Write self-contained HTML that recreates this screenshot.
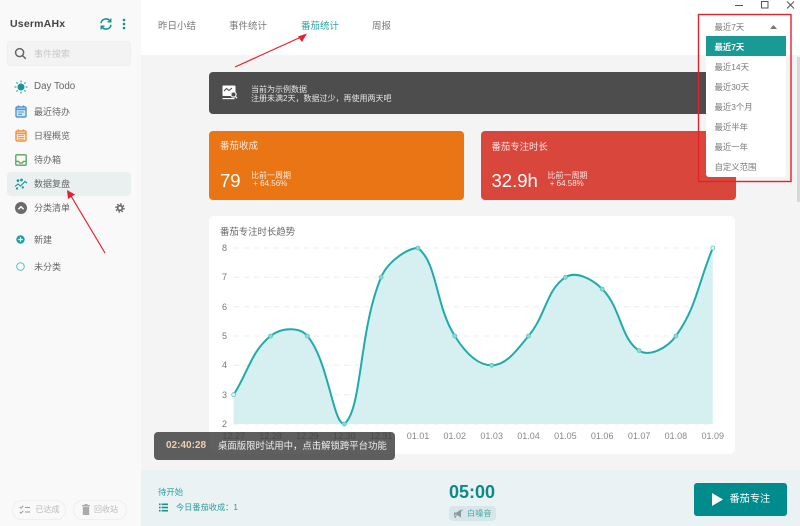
<!DOCTYPE html>
<html lang="zh">
<head>
<meta charset="utf-8">
<title>UsermAHx</title>
<style>
html,body{margin:0;padding:0}
body{width:800px;height:526px;overflow:hidden;position:relative;background:#f4f4f4;font-family:"Liberation Sans","Noto Sans CJK SC",sans-serif;color:#555}
.a{position:absolute;white-space:nowrap}
svg{display:block}
#side{left:0;top:0;width:141px;height:526px;background:#f9f9f9}
#top{left:141px;top:0;width:659px;height:55px;background:#fff}
.nav{top:20px;font-size:9.5px;line-height:14px;color:#777}
.si{left:34px;font-size:9px;line-height:14px;color:#666}
.dd{left:714.5px;font-size:8.4px;line-height:14px;color:#777}
.yl{left:222px;font-size:9px;line-height:10px;color:#777}
.xl{top:431px;font-size:9px;line-height:10px;color:#888;width:40px;text-align:center;margin-left:-20px}
.btn{top:500px;height:18px;width:52px;border:1px solid #efefef;border-radius:10px;font-size:8px;line-height:18px;color:#bbb;box-sizing:content-box}
</style>
</head>
<body>
<div class="a" id="side"></div>
<div class="a" id="top"></div>

<!-- sidebar header -->
<div class="a" style="left:10px;top:16px;font-size:10.5px;font-weight:bold;line-height:17px;color:#444;letter-spacing:.2px">UsermAHx</div>
<svg class="a" style="left:99px;top:17px" width="14" height="14" viewBox="0 0 14 14" fill="none" stroke="#0f8f8c" stroke-width="1.5"><path d="M2 6.2A5 5 0 0 1 11 4M12 7.8A5 5 0 0 1 3 10"/><path d="M11.8 1.5V4.8H8.6M2.2 12.5V9.2H5.4" stroke-width="1.3"/></svg>
<svg class="a" style="left:121px;top:18px" width="6" height="12" viewBox="0 0 6 12" fill="#0f8f8c"><circle cx="3" cy="2" r="1.3"/><circle cx="3" cy="6" r="1.3"/><circle cx="3" cy="10" r="1.3"/></svg>

<!-- search -->
<div class="a" style="left:7px;top:41px;width:124px;height:25px;background:#f3f3f3;border:1px solid #efefef;border-radius:4px;box-sizing:border-box"></div>
<svg class="a" style="left:14px;top:47px" width="13" height="13" viewBox="0 0 13 13" fill="none" stroke="#666" stroke-width="1.5"><circle cx="5.6" cy="5.6" r="4"/><path d="M8.6 8.6L11.8 11.8"/></svg>
<div class="a" style="left:34px;top:47px;font-size:9px;line-height:14px;color:#c8c8c8">事件搜索</div>

<!-- sidebar items -->
<svg class="a" style="left:14px;top:80px" width="14" height="14" viewBox="0 0 14 14" fill="none" stroke="#14979a" stroke-width="1"><circle cx="7" cy="7" r="3" fill="#14979a"/><path d="M7 .5V2.4M7 11.6V13.5M.5 7H2.4M11.6 7H13.5M2.4 2.4L3.7 3.7M10.3 10.3L11.6 11.6M2.4 11.6L3.7 10.3M10.3 3.7L11.6 2.4"/></svg>
<div class="a si" style="top:80px;font-size:9.8px">Day Todo</div>

<svg class="a" style="left:15px;top:105px" width="12" height="13" viewBox="0 0 12 13" fill="none" stroke="#4f97cf" stroke-width="1.4"><rect x="1" y="2" width="10" height="10" rx="1.2" fill="#d6e8f5"/><path d="M1 4.4H11" stroke-width="1.6"/><path d="M3.5 .4V2.5M8.5 .4V2.5"/><path d="M3.2 7H8.8M3.2 9.3H7" stroke-width="1.1"/></svg>
<div class="a si" style="top:105px">最近待办</div>

<svg class="a" style="left:15px;top:129px" width="12" height="13" viewBox="0 0 12 13" fill="none" stroke="#ee9447" stroke-width="1.4"><rect x="1" y="2" width="10" height="10" rx="1.2" fill="#fbe6d2"/><path d="M1 4.4H11" stroke-width="1.6"/><path d="M3.5 .4V2.5M8.5 .4V2.5"/><path d="M3 6.6H9M3 8.4H9M3 10.2H9" stroke-width=".9"/></svg>
<div class="a si" style="top:129px">日程概览</div>

<svg class="a" style="left:15px;top:154px" width="12" height="12" viewBox="0 0 12 12" fill="none" stroke="#58a45c" stroke-width="1.3"><rect x=".8" y=".8" width="10.4" height="10.4" rx="1"/><path d="M.8 7.4H3.6L4.6 9H7.4L8.4 7.4H11.2"/></svg>
<div class="a si" style="top:153px">待办箱</div>

<div class="a" style="left:7px;top:172px;width:124px;height:24px;background:#eaeff0;border-radius:4px"></div>
<svg class="a" style="left:14px;top:178px" width="14" height="12" viewBox="0 0 14 12" fill="none" stroke="#14979a" stroke-width="1.1"><path d="M1 8.5L4 6L6.5 8L11 3.5L13 5"/><circle cx="4" cy="2.6" r=".8" fill="#14979a"/><circle cx="7.5" cy="2" r=".8" fill="#14979a"/><circle cx="3" cy="10.5" r=".6" fill="#14979a"/><circle cx="8.8" cy="9.4" r=".6" fill="#14979a"/></svg>
<div class="a si" style="top:177px">数据复盘</div>

<svg class="a" style="left:15px;top:202px" width="12" height="12" viewBox="0 0 12 12"><circle cx="6" cy="6" r="6" fill="#6b6b6b"/><path d="M3.4 7.2L6 4.7L8.6 7.2" fill="none" stroke="#fff" stroke-width="1.4"/></svg>
<div class="a si" style="top:201px">分类清单</div>
<svg class="a" style="left:115px;top:203px" width="10" height="10" viewBox="0 0 10 10" fill="none" stroke="#666"><circle cx="5" cy="5" r="2.4" stroke-width="1.7"/><circle cx="5" cy="5" r="4" stroke-width="1.4" stroke-dasharray="1.6 1.54"/></svg>

<svg class="a" style="left:16px;top:235px" width="9" height="9" viewBox="0 0 9 9"><circle cx="4.5" cy="4.5" r="4.2" fill="#17a3a5"/><path d="M2.3 4.5H6.7M4.5 2.3V6.7" stroke="#fff" stroke-width="1.2"/></svg>
<div class="a si" style="top:233px">新建</div>

<svg class="a" style="left:16px;top:262px" width="9" height="9" viewBox="0 0 9 9"><circle cx="4.5" cy="4.5" r="3.8" fill="none" stroke="#55c3c7" stroke-width="1"/></svg>
<div class="a si" style="top:260px">未分类</div>

<!-- bottom side buttons -->
<div class="a btn" style="left:11.5px"><span style="position:absolute;left:23px">已达成</span></div>
<svg class="a" style="left:19px;top:505px" width="12" height="10" viewBox="0 0 12 10" fill="none" stroke="#999" stroke-width="1"><path d="M.8 2L2 3.2L4.2 .8M.8 7L2 8.2L4.2 5.8M6 2.5H11M6 7H11"/></svg>
<div class="a btn" style="left:73px"><span style="position:absolute;left:20px">回收站</span></div>
<svg class="a" style="left:82px;top:504px" width="8" height="11" viewBox="0 0 8 11" fill="#aaa"><rect x="0" y="1" width="8" height="1.3"/><rect x="2.5" y="0" width="3" height="1.3"/><path d="M.8 2.8H7.2V11H.8Z"/></svg>

<!-- top nav -->
<div class="a nav" style="left:158px">昨日小结</div>
<div class="a nav" style="left:229px">事件统计</div>
<div class="a nav" style="left:301px;color:#2aa3a3">番茄统计</div>
<div class="a nav" style="left:372px">周报</div>

<!-- scrollbar -->
<div class="a" style="left:797px;top:57px;width:3px;height:145px;background:#d8d8d8"></div>

<!-- notice -->
<div class="a" style="left:209px;top:72px;width:526px;height:42px;background:#4d4d4d;border-radius:4px"></div>
<svg class="a" style="left:222px;top:85px" width="16" height="16" viewBox="0 0 16 16" fill="none"><rect x=".5" y=".5" width="13" height="10.5" rx="1" fill="#fff"/><path d="M2 6L4.5 3.5L7 5.5L10 3" stroke="#4d4d4d" stroke-width="1.1"/><rect x=".5" y="13" width="12" height="1.2" fill="#fff"/><circle cx="11.5" cy="9.5" r="2.6" fill="#4d4d4d" stroke="#fff" stroke-width="1.1"/><path d="M13.3 11.4L15 13.2" stroke="#fff" stroke-width="1.2"/></svg>
<div class="a" style="left:251px;top:85px;font-size:8px;line-height:9px;color:#e6e6e6">当前为示例数据<br>注册未满2天，数据过少，再使用两天吧</div>

<!-- cards -->
<div class="a" style="left:209px;top:131px;width:255px;height:69px;background:#ea7514;border-radius:4px"></div>
<div class="a" style="left:220px;top:140px;font-size:9.5px;line-height:14px;color:#fbeadb">番茄收成</div>
<div class="a" style="left:220px;top:169px;font-size:18.5px;line-height:24px;color:#fff">79</div>
<div class="a" style="left:251px;top:171.5px;font-size:8px;line-height:8.8px;color:#fbeadb">比前一周期<br>&nbsp;+ 64.56%</div>

<div class="a" style="left:480.5px;top:131px;width:255px;height:69px;background:#d8463c;border-radius:4px"></div>
<div class="a" style="left:491.5px;top:140px;font-size:9.4px;line-height:14px;color:#fbe6e3">番茄专注时长</div>
<div class="a" style="left:491.5px;top:169px;font-size:18.5px;line-height:24px;color:#fff">32.9h</div>
<div class="a" style="left:547.5px;top:171.5px;font-size:8px;line-height:8.8px;color:#fbe6e3">比前一周期<br>&nbsp;+ 64.58%</div>

<!-- chart card -->
<div class="a" style="left:209px;top:216px;width:526px;height:238px;background:#fff;border-radius:5px"></div>
<div class="a" style="left:220px;top:225px;font-size:9.4px;line-height:14px;color:#666">番茄专注时长趋势</div>
<svg class="a" style="left:209px;top:216px" width="526" height="238" viewBox="209 216 526 238" fill="none">
<g stroke="#ececec" stroke-width="1" stroke-dasharray="5 5">
<path d="M234 248H713M234 277.3H713M234 306.7H713M234 336H713M234 365.3H713M234 394.7H713M234 424H713"/>
</g>
<path fill="#d6f0f1" d="M233.7 394.7C248.5 371.2 251.4 351.3 270.6 336C280.8 327.8 299.2 326.2 307.4 336C328.7 361.4 332.9 424 344.3 424C362.4 409.6 358.6 331 381.1 277.3C388.1 260.6 408.3 248 418 248C437.8 263.7 435 304.6 454.8 336C464.5 351.5 477 365.3 491.7 365.3C506.4 365.3 516.6 350.3 528.5 336C546 315.1 546.5 289.4 565.4 277.3C575.9 270.6 591.9 278.7 602.2 289C621.4 308.1 620.1 338.5 639.1 350.6C649.6 357.3 667.3 348 675.9 336C696.8 307 698 283.2 712.8 248V424H233.7Z"/>
<path stroke="#20abab" stroke-width="2" d="M233.7 394.7C248.5 371.2 251.4 351.3 270.6 336C280.8 327.8 299.2 326.2 307.4 336C328.7 361.4 332.9 424 344.3 424C362.4 409.6 358.6 331 381.1 277.3C388.1 260.6 408.3 248 418 248C437.8 263.7 435 304.6 454.8 336C464.5 351.5 477 365.3 491.7 365.3C506.4 365.3 516.6 350.3 528.5 336C546 315.1 546.5 289.4 565.4 277.3C575.9 270.6 591.9 278.7 602.2 289C621.4 308.1 620.1 338.5 639.1 350.6C649.6 357.3 667.3 348 675.9 336C696.8 307 698 283.2 712.8 248"/>
<g fill="#8ed8d8" stroke="#5cc4c6" stroke-width=".8">
<circle cx="270.6" cy="336" r="2"/><circle cx="307.4" cy="336" r="2"/><circle cx="344.3" cy="424" r="2"/><circle cx="381.1" cy="277.3" r="2"/><circle cx="418" cy="248" r="2"/><circle cx="454.8" cy="336" r="2"/><circle cx="491.7" cy="365.3" r="2"/><circle cx="528.5" cy="336" r="2"/><circle cx="565.4" cy="277.3" r="2"/><circle cx="602.2" cy="289" r="2"/><circle cx="639.1" cy="350.6" r="2"/><circle cx="675.9" cy="336" r="2"/>
<circle cx="233.7" cy="394.7" r="2" fill="#e4f6f6"/><circle cx="712.8" cy="248" r="2" fill="#e4f6f6"/>
</g>
</svg>
<div class="a yl" style="top:243px">8</div><div class="a yl" style="top:272px">7</div><div class="a yl" style="top:302px">6</div><div class="a yl" style="top:331px">5</div><div class="a yl" style="top:360px">4</div><div class="a yl" style="top:390px">3</div><div class="a yl" style="top:419px">2</div>
<div class="a xl" style="left:233.7px">12.27</div><div class="a xl" style="left:270.6px">12.28</div><div class="a xl" style="left:307.4px">12.29</div><div class="a xl" style="left:344.3px">12.30</div><div class="a xl" style="left:381.1px">12.31</div><div class="a xl" style="left:418px">01.01</div><div class="a xl" style="left:454.8px">01.02</div><div class="a xl" style="left:491.7px">01.03</div><div class="a xl" style="left:528.5px">01.04</div><div class="a xl" style="left:565.4px">01.05</div><div class="a xl" style="left:602.2px">01.06</div><div class="a xl" style="left:639.1px">01.07</div><div class="a xl" style="left:675.9px">01.08</div><div class="a xl" style="left:712.8px">01.09</div>

<!-- bottom bar -->
<div class="a" style="left:141px;top:470px;width:659px;height:56px;background:#eaf2f4"></div>
<div class="a" style="left:158px;top:486px;font-size:8.4px;line-height:13px;color:#2aa3a3">待开始</div>
<svg class="a" style="left:159px;top:503px" width="9" height="9" viewBox="0 0 9 9" fill="#17918f"><rect x="0" y=".5" width="1.6" height="1.6"/><rect x="2.6" y=".5" width="6.4" height="1.6"/><rect x="0" y="3.7" width="1.6" height="1.6"/><rect x="2.6" y="3.7" width="6.4" height="1.6"/><rect x="0" y="6.9" width="1.6" height="1.6"/><rect x="2.6" y="6.9" width="6.4" height="1.6"/></svg>
<div class="a" style="left:176px;top:501px;font-size:8.2px;line-height:13px;color:#2a9d9d">今日番茄收成：1</div>
<div class="a" style="left:448px;top:481px;width:48px;text-align:center;font-size:18px;font-weight:bold;line-height:22px;color:#0b8a88">05:00</div>
<div class="a" style="left:449px;top:506px;width:47px;height:15px;background:#d7e6e9;border-radius:4px"></div>
<svg class="a" style="left:454px;top:509px" width="9" height="9" viewBox="0 0 9 9" fill="#8a9a9c"><path d="M0 3.5H2.5L7 .5V8.5L2.5 5.5H1L2 9H.8L0 5.5Z"/><path d="M8.8 .5L.5 8.5" stroke="#8a9a9c" stroke-width=".8"/></svg>
<div class="a" style="left:467px;top:507px;font-size:8.2px;line-height:13px;color:#4da8a8">白噪音</div>
<div class="a" style="left:694px;top:483px;width:93px;height:33px;background:#008c8c;border-radius:3px"></div>
<svg class="a" style="left:712px;top:493px" width="11" height="13" viewBox="0 0 11 13" fill="#fff"><path d="M0 0L11 6.5L0 13Z"/></svg>
<div class="a" style="left:729.5px;top:492px;font-size:10.2px;line-height:15px;color:#fff">番茄专注</div>

<!-- toast -->
<div class="a" style="left:154px;top:432px;width:241px;height:28px;background:rgba(60,60,60,.82);border-radius:4px"></div>
<div class="a" style="left:166px;top:439px;font-size:10px;font-weight:bold;line-height:14px;color:#eccfae">02:40:28</div>
<div class="a" style="left:218px;top:439px;font-size:9.4px;line-height:14px;color:#eee">桌面版限时试用中，点击解锁跨平台功能</div>

<!-- dropdown -->
<div class="a" style="left:706px;top:17px;width:80px;height:160px;background:#fff;border-radius:3px"></div>
<div class="a dd" style="top:20px">最近7天</div>
<svg class="a" style="left:770px;top:25px" width="7" height="4" viewBox="0 0 7 4" fill="#777"><path d="M0 4L3.5 0L7 4Z"/></svg>
<div class="a" style="left:706px;top:36px;width:80px;height:20px;background:#1a9a94"></div>
<div class="a dd" style="top:40px;color:#fff;font-weight:bold">最近7天</div>
<div class="a dd" style="top:60px">最近14天</div>
<div class="a dd" style="top:80px">最近30天</div>
<div class="a dd" style="top:100px">最近3个月</div>
<div class="a dd" style="top:120px">最近半年</div>
<div class="a dd" style="top:140px">最近一年</div>
<div class="a dd" style="top:160px">自定义范围</div>

<!-- window controls -->
<svg class="a" style="left:730px;top:0" width="70" height="12" viewBox="0 0 70 12" fill="none" stroke="#555" stroke-width="1"><path d="M5 5.5H13"/><rect x="31.5" y="1.5" width="6.5" height="6.5"/><path d="M57 1.5L64 8.5M64 1.5L57 8.5"/></svg>

<!-- annotations -->
<svg class="a" style="left:0;top:0" width="800" height="526" viewBox="0 0 800 526" fill="none">
<rect x="698.5" y="14.5" width="92.5" height="167" stroke="#e8202c" stroke-width="1.4"/>
<path d="M235 67L300 37.5" stroke="#e8202c" stroke-width="1.2"/>
<path d="M307 33.5L298 36.5L302 42Z" fill="#e8202c"/>
<path d="M105 253L71 196" stroke="#e8202c" stroke-width="1.2"/>
<path d="M67 190L75 194.5L68 199Z" fill="#e8202c"/>
</svg>
</body>
</html>
